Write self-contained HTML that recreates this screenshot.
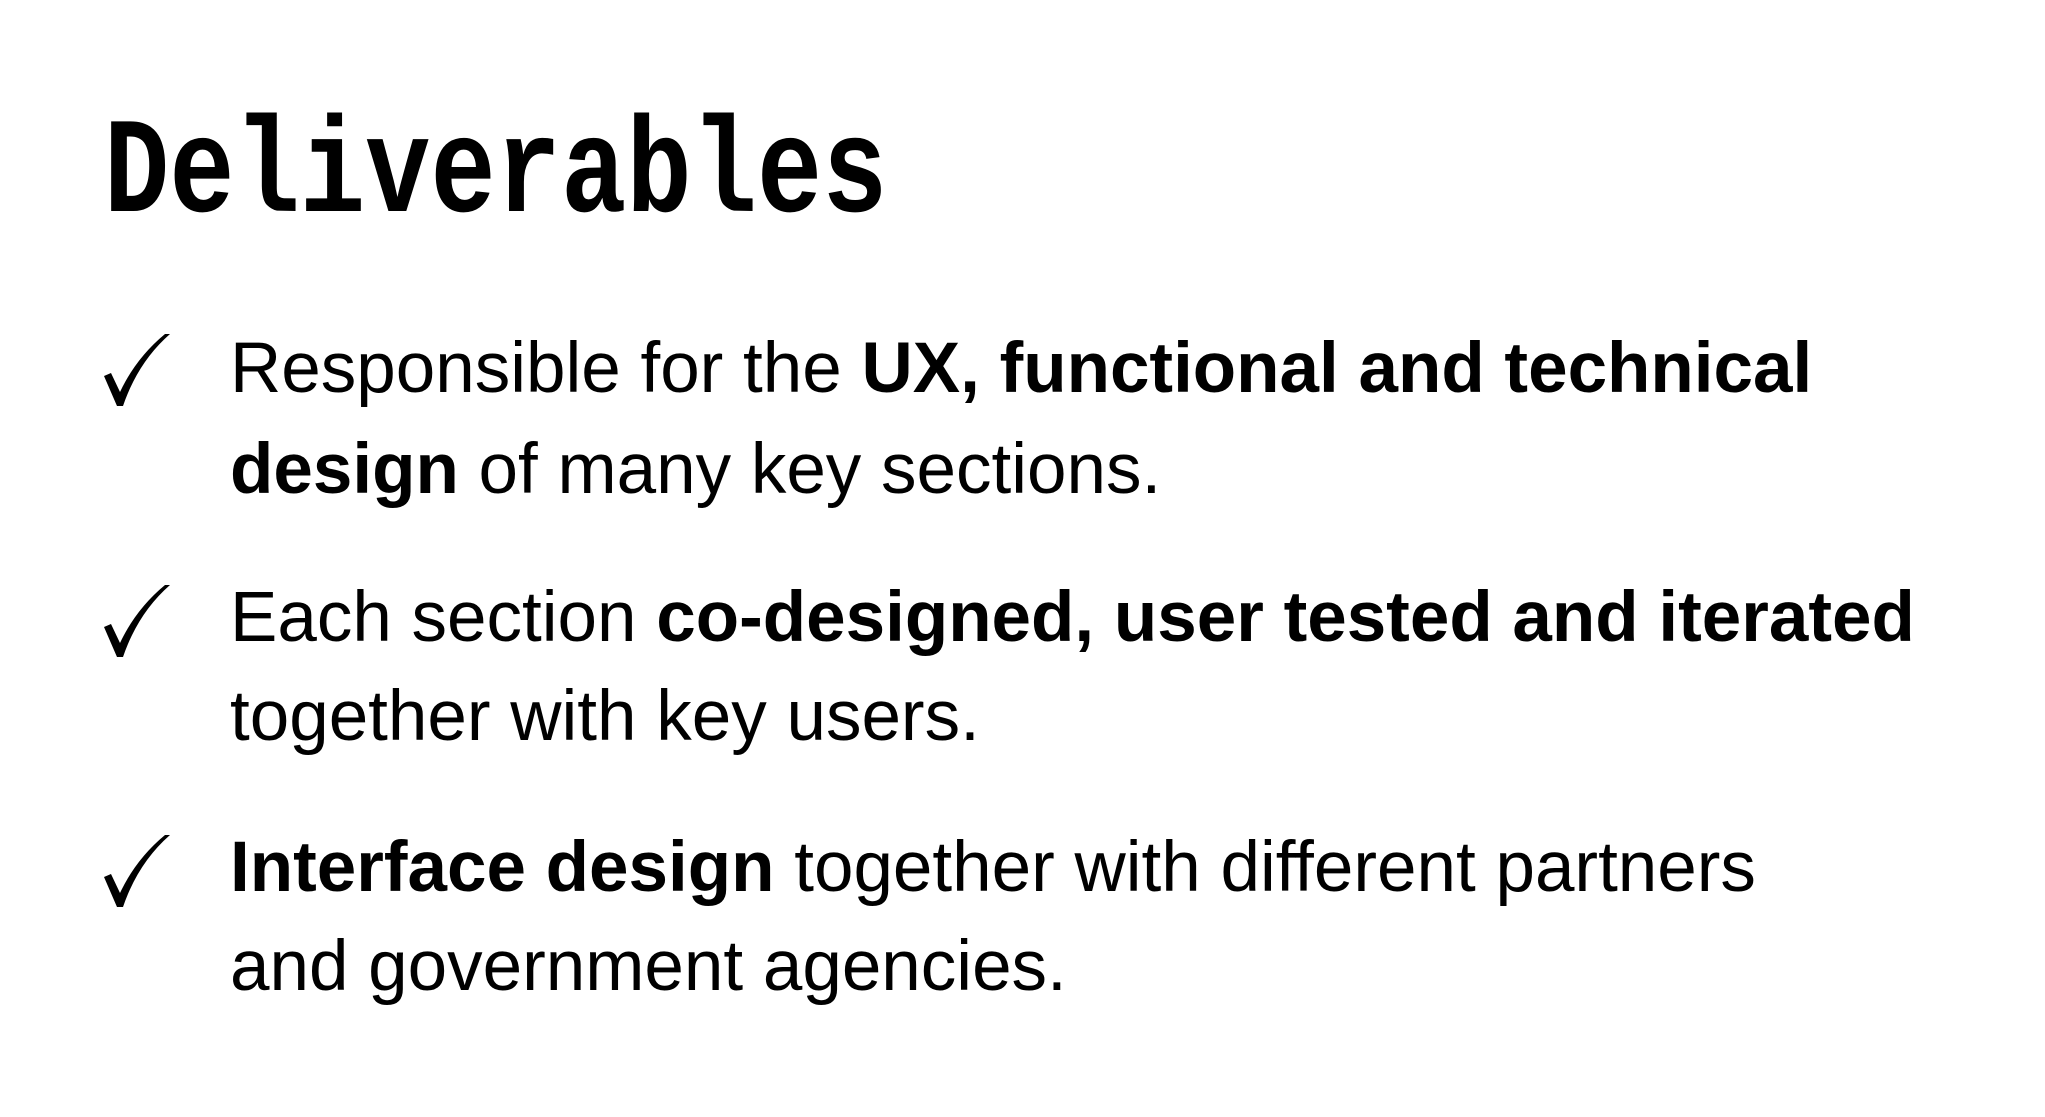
<!DOCTYPE html>
<html><head><meta charset="utf-8"><style>
html,body{margin:0;padding:0;background:#fff;}
body{width:2045px;height:1117px;position:relative;overflow:hidden;color:#000;}
.t{position:absolute;left:104px;top:100px;font-family:"Liberation Mono",monospace;font-weight:bold;font-size:136px;line-height:150px;transform:scaleX(0.8);transform-origin:left top;white-space:nowrap;}
.l{position:absolute;left:230px;font-family:"Liberation Sans",sans-serif;font-size:71px;line-height:80px;white-space:nowrap;}
.c{position:absolute;left:102px;width:70px;height:76px;}
b{font-weight:bold;}
</style></head><body>
<div class="t">Deliverables</div>

<svg class="c" style="top:332px" viewBox="0 0 70 76"><path d="M2 44 L15 74 L21 74 Q36 30 68 2 L63 2 Q34 26 18 60 L9 41 Z" fill="#000"/></svg>
<div class="l" style="top:329px">Responsible for the <b>UX, functional and technical</b></div>
<div class="l" style="top:430px"><b>design</b> of many key sections.</div>

<svg class="c" style="top:583px" viewBox="0 0 70 76"><path d="M2 44 L15 74 L21 74 Q36 30 68 2 L63 2 Q34 26 18 60 L9 41 Z" fill="#000"/></svg>
<div class="l" style="top:578px">Each section <b>co-designed, user tested and iterated</b></div>
<div class="l" style="top:677px">together with key users.</div>

<svg class="c" style="top:833px" viewBox="0 0 70 76"><path d="M2 44 L15 74 L21 74 Q36 30 68 2 L63 2 Q34 26 18 60 L9 41 Z" fill="#000"/></svg>
<div class="l" style="top:828px"><b>Interface design</b> together with different partners</div>
<div class="l" style="top:927px">and government agencies.</div>
</body></html>
